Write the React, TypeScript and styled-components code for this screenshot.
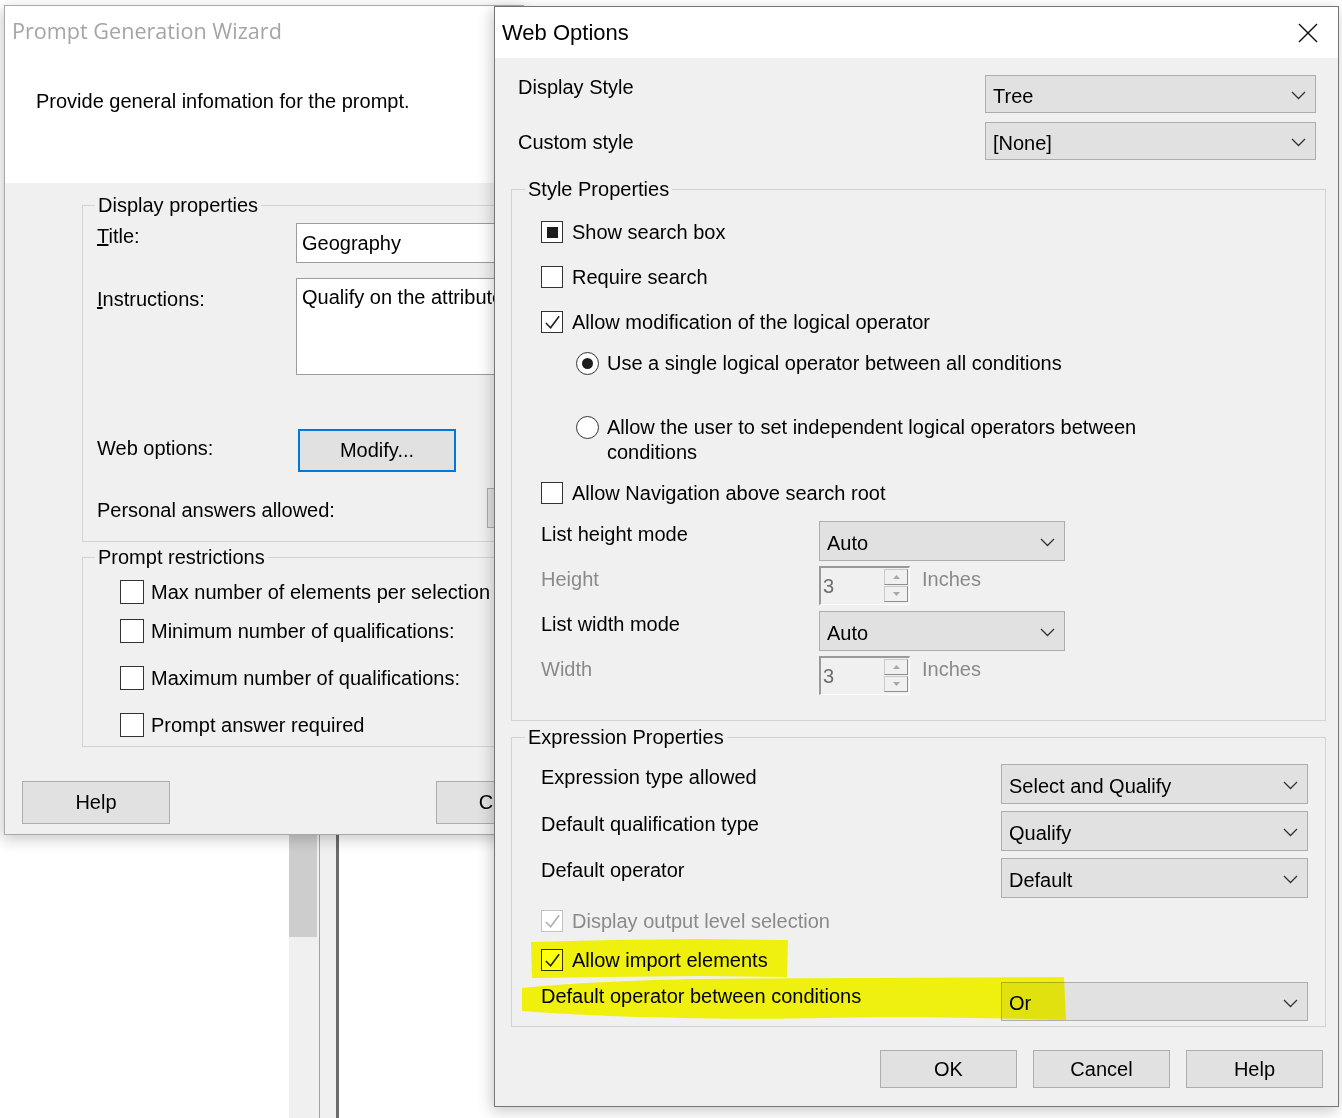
import React from "react";
import styled, { createGlobalStyle } from "styled-components";

const DISABLED = "#8a8a8a";

const GlobalStyle = createGlobalStyle`
  html, body {
    margin: 0;
    padding: 0;
    background: #fff;
  }
  body {
    font-family: "Liberation Sans", Arial, sans-serif;
    font-size: 20px;
    color: #000;
  }
  * {
    box-sizing: border-box;
  }
`;

const Desktop = styled.div`
  position: relative;
  width: 1342px;
  height: 1118px;
  overflow: hidden;
  background: #fff;
`;

/* window behind the dialogs, only its splitter strip is visible */
const BackPane = styled.div`
  position: absolute;
  left: 289px;
  top: 835px;
  width: 50px;
  height: 283px;
  display: flex;
`;

const Track = styled.div`
  width: 30px;
  background: #f0f0f0;
`;

const Thumb = styled.div`
  width: 28px;
  height: 102px;
  background: #cdcdcd;
`;

const Splitter = styled.div`
  width: 1px;
  background: #a3a3a3;
`;

const PaneGap = styled.div`
  width: 16px;
  background: #f0f0f0;
`;

const PaneEdge = styled.div`
  width: 3px;
  background: #6b6b6b;
`;

const Window = styled.div<{ $x: number; $y: number; $w: number; $h: number; $edge: string }>`
  position: absolute;
  left: ${(p) => p.$x}px;
  top: ${(p) => p.$y}px;
  width: ${(p) => p.$w}px;
  height: ${(p) => p.$h}px;
  display: flex;
  flex-direction: column;
  background: #f0f0f0;
  border: 1px solid ${(p) => p.$edge};
  box-shadow: -2px 4px 14px rgba(0, 0, 0, 0.22);
`;

/* ---------- wizard (left window) ---------- */

const WizardHeader = styled.div`
  height: 177px;
  background: #fff;
  padding: 11px 0 0 7px;
  display: flex;
  flex-direction: column;
`;

const WizardTitle = styled.div`
  font-family: "Open Sans", "Noto Sans", sans-serif;
  font-size: 21.6px;
  line-height: 28px;
  color: #a2a6aa;
`;

const WizardIntro = styled.div`
  margin-top: 44px;
  padding-left: 24px;
  line-height: 24px;
`;

const WizardBody = styled.div`
  flex: 1;
  display: flex;
  flex-direction: column;
  padding-top: 10px;
`;

const Group = styled.fieldset<{ $mt: number; $ml: number; $mr: number; $pl: number; $pb: number }>`
  margin: ${(p) => p.$mt}px ${(p) => p.$mr}px 0 ${(p) => p.$ml}px;
  padding: 0 0 ${(p) => p.$pb}px ${(p) => p.$pl}px;
  border: 1px solid #d3d3d3;
  min-width: 0;
`;

const Legend = styled.legend`
  padding: 0 3px;
  font-size: 20px;
  line-height: 24px;
`;

const Stack = styled.div<{ $indent: number }>`
  display: flex;
  flex-direction: column;
  padding-left: ${(p) => p.$indent}px;
`;

const FormRow = styled.div<{ $mt: number }>`
  display: flex;
  align-items: flex-start;
  margin-top: ${(p) => p.$mt}px;
`;

const FormLabel = styled.div<{ $w: number; $dy: number; $muted?: boolean }>`
  width: ${(p) => p.$w}px;
  flex: none;
  padding-top: ${(p) => p.$dy}px;
  line-height: 24px;
  white-space: nowrap;
  color: ${(p) => (p.$muted ? DISABLED : "#000")};
`;

const TextBox = styled.div<{ $h: number; $pt: number }>`
  width: 220px;
  height: ${(p) => p.$h}px;
  padding: ${(p) => p.$pt}px 0 0 5px;
  background: #fff;
  border: 1px solid #9c9c9c;
  line-height: 24px;
  white-space: nowrap;
  overflow: hidden;
`;

const PushButton = styled.div<{ $w: number; $h: number; $focused?: boolean; $ml?: number }>`
  width: ${(p) => p.$w}px;
  height: ${(p) => p.$h}px;
  margin-left: ${(p) => p.$ml ?? 0}px;
  flex: none;
  display: flex;
  align-items: center;
  justify-content: center;
  background: #e1e1e1;
  border: ${(p) => (p.$focused ? "2px solid #0078d7" : "1px solid #adadad")};
  white-space: nowrap;
`;

const WizardFooter = styled.div`
  display: flex;
  padding: 34px 0 0 17px;
`;

/* ---------- web options (right window) ---------- */

const TitleBar = styled.div`
  height: 51px;
  flex: none;
  background: #fff;
  display: flex;
  align-items: center;
  justify-content: space-between;
  padding: 0 20px 0 7px;
`;

const TitleText = styled.div`
  font-size: 22px;
  line-height: 28px;
`;

const OptionsBody = styled.div`
  flex: 1;
  display: flex;
  flex-direction: column;
  padding: 17px 12px 0 16px;
`;

const TopRow = styled.div<{ $mt: number }>`
  display: flex;
  align-items: flex-start;
  justify-content: space-between;
  margin-top: ${(p) => p.$mt}px;
  padding: 0 10px 0 7px;
`;

const ExprRow = styled.div<{ $mt: number }>`
  display: flex;
  align-items: flex-start;
  justify-content: space-between;
  margin-top: ${(p) => p.$mt}px;
  padding-right: 17px;
`;

const GridRow = styled.div<{ $mt: number }>`
  display: grid;
  grid-template-columns: 278px auto;
  align-items: start;
  margin-top: ${(p) => p.$mt}px;
`;

const SelectBox = styled.div<{ $w: number; $h: number }>`
  width: ${(p) => p.$w}px;
  height: ${(p) => p.$h}px;
  flex: none;
  display: flex;
  align-items: center;
  justify-content: space-between;
  padding: 3px 9px 0 7px;
  background: #e1e1e1;
  border: 1px solid #adadad;
  line-height: 24px;
`;

const CheckRow = styled.div<{ $mt: number; $gap: number; $muted?: boolean }>`
  display: flex;
  align-items: center;
  gap: ${(p) => p.$gap}px;
  margin-top: ${(p) => p.$mt}px;
  line-height: 24px;
  color: ${(p) => (p.$muted ? DISABLED : "#000")};
  white-space: nowrap;
`;

const Box = styled.span<{ $size: number; $muted?: boolean }>`
  width: ${(p) => p.$size}px;
  height: ${(p) => p.$size}px;
  flex: none;
  display: flex;
  align-items: center;
  justify-content: center;
  background: #fff;
  border: 1.5px solid ${(p) => (p.$muted ? "#c4c4c4" : "#333")};
`;

const MixedMark = styled.span`
  width: 11px;
  height: 11px;
  background: #1c1c1c;
`;

const RadioRow = styled.div<{ $mt: number }>`
  display: flex;
  align-items: flex-start;
  gap: 8px;
  margin: ${(p) => p.$mt}px 0 0 35px;
  line-height: 25px;
`;

const RadioDot = styled.span<{ $on?: boolean }>`
  width: 23px;
  height: 23px;
  flex: none;
  margin-top: 1px;
  border-radius: 50%;
  border: 1.5px solid #333;
  background: #fff;
  display: flex;
  align-items: center;
  justify-content: center;

  &::after {
    content: "";
    display: ${(p) => (p.$on ? "block" : "none")};
    width: 11px;
    height: 11px;
    border-radius: 50%;
    background: #1c1c1c;
  }
`;

const RadioText = styled.span`
  max-width: 560px;
`;

const SpinLine = styled.div`
  display: flex;
  align-items: flex-start;
  gap: 12px;
`;

const Spinner = styled.div`
  width: 91px;
  height: 39px;
  display: flex;
  background: #f0f0f0;
  border-top: 2px solid #9a9a9a;
  border-left: 2px solid #9a9a9a;
  border-bottom: 1px solid #fff;
  border-right: 1px solid #fff;
`;

const SpinValue = styled.span`
  flex: 1;
  padding: 6px 0 0 2px;
  line-height: 24px;
  color: #6d6d6d;
`;

const SpinButtons = styled.div`
  width: 24px;
  display: flex;
  flex-direction: column;
  gap: 1px;
  margin: 1px 1px 2px 0;
`;

const SpinButton = styled.div`
  flex: 1;
  display: flex;
  align-items: center;
  justify-content: center;
  border: 1px solid #cacaca;
  border-right-color: #8f8f8f;
  border-bottom-color: #8f8f8f;
  background: #f0f0f0;
`;

const Unit = styled.span`
  padding-top: 1px;
  line-height: 24px;
  color: ${DISABLED};
`;

const OptionsFooter = styled.div`
  display: flex;
  justify-content: flex-end;
  gap: 16px;
  padding: 23px 3px 0 0;
`;

const Marker = styled.svg`
  position: absolute;
  left: 0;
  top: 0;
  width: 1342px;
  height: 1118px;
  pointer-events: none;
  mix-blend-mode: multiply;
`;

type CheckState = "off" | "on" | "mixed";

const Check = ({ state, size, muted }: { state: CheckState; size: number; muted?: boolean }) => (
  <Box $size={size} $muted={muted}>
    {state === "on" && (
      <svg width={size - 3} height={size - 3} viewBox="0 0 20 20">
        <polyline
          points="3,10.5 8,15.5 17,3.5"
          fill="none"
          stroke={muted ? "#b0b0b0" : "#222"}
          strokeWidth="1.7"
        />
      </svg>
    )}
    {state === "mixed" && <MixedMark />}
  </Box>
);

const Chevron = () => (
  <svg width="15" height="9" viewBox="0 0 15 9">
    <polyline points="1,1 7.5,7.5 14,1" fill="none" stroke="#333" strokeWidth="1.3" />
  </svg>
);

const Select = ({ value, w, h }: { value: string; w: number; h: number }) => (
  <SelectBox $w={w} $h={h}>
    <span>{value}</span>
    <Chevron />
  </SelectBox>
);

const Arrow = ({ up }: { up?: boolean }) => (
  <svg width="7" height="4" viewBox="0 0 7 4">
    <polygon points={up ? "0,4 3.5,0 7,4" : "0,0 3.5,4 7,0"} fill="#a8a8a8" />
  </svg>
);

const SpinField = ({ value }: { value: string }) => (
  <SpinLine>
    <Spinner>
      <SpinValue>{value}</SpinValue>
      <SpinButtons>
        <SpinButton>
          <Arrow up />
        </SpinButton>
        <SpinButton>
          <Arrow />
        </SpinButton>
      </SpinButtons>
    </Spinner>
    <Unit>Inches</Unit>
  </SpinLine>
);

const CloseIcon = () => (
  <svg width="20" height="20" viewBox="0 0 20 20">
    <line x1="1" y1="1" x2="19" y2="19" stroke="#111" strokeWidth="1.5" />
    <line x1="19" y1="1" x2="1" y2="19" stroke="#111" strokeWidth="1.5" />
  </svg>
);

const restrictions = [
  { mt: 11, text: "Max number of elements per selection" },
  { mt: 15, text: "Minimum number of qualifications:" },
  { mt: 23, text: "Maximum number of qualifications:" },
  { mt: 23, text: "Prompt answer required" },
];

const expressionRows = [
  { mt: 15, dy: 1, label: "Expression type allowed", value: "Select and Qualify" },
  { mt: 7, dy: 1, label: "Default qualification type", value: "Qualify" },
  { mt: 7, dy: 0, label: "Default operator", value: "Default" },
];

export default function App() {
  return (
    <>
      <GlobalStyle />
      <Desktop>
        <BackPane>
          <Track>
            <Thumb />
          </Track>
          <Splitter />
          <PaneGap />
          <PaneEdge />
        </BackPane>

        <Window $x={4} $y={5} $w={520} $h={830} $edge="#a9a9a9">
          <WizardHeader>
            <WizardTitle>Prompt Generation Wizard</WizardTitle>
            <WizardIntro>Provide general infomation for the prompt.</WizardIntro>
          </WizardHeader>
          <WizardBody>
            <Group $mt={0} $ml={77} $mr={0} $pl={12} $pb={13}>
              <Legend>Display properties</Legend>
              <Stack $indent={2}>
                <FormRow $mt={6}>
                  <FormLabel $w={199} $dy={1}>
                    <u>T</u>itle:
                  </FormLabel>
                  <TextBox $h={40} $pt={7}>Geography</TextBox>
                </FormRow>
                <FormRow $mt={15}>
                  <FormLabel $w={199} $dy={9}>
                    <u>I</u>nstructions:
                  </FormLabel>
                  <TextBox $h={97} $pt={6}>Qualify on the attribute</TextBox>
                </FormRow>
                <FormRow $mt={54}>
                  <FormLabel $w={199} $dy={7}>Web options:</FormLabel>
                  <PushButton $w={158} $h={43} $ml={2} $focused>
                    Modify...
                  </PushButton>
                </FormRow>
                <FormRow $mt={16}>
                  <FormLabel $w={390} $dy={10}>Personal answers allowed:</FormLabel>
                  <PushButton $w={100} $h={40} />
                </FormRow>
              </Stack>
            </Group>
            <Group $mt={3} $ml={77} $mr={0} $pl={12} $pb={9}>
              <Legend>Prompt restrictions</Legend>
              <Stack $indent={25}>
                {restrictions.map((r) => (
                  <CheckRow key={r.text} $mt={r.mt} $gap={7}>
                    <Check state="off" size={24} />
                    {r.text}
                  </CheckRow>
                ))}
              </Stack>
            </Group>
            <WizardFooter>
              <PushButton $w={148} $h={43}>Help</PushButton>
              <PushButton $w={148} $h={43} $ml={266}>Cancel</PushButton>
            </WizardFooter>
          </WizardBody>
        </Window>

        <Window $x={494} $y={6} $w={845} $h={1101} $edge="#767676">
          <TitleBar>
            <TitleText>Web Options</TitleText>
            <CloseIcon />
          </TitleBar>
          <OptionsBody>
            <TopRow $mt={0}>
              <FormLabel $w={300} $dy={0}>Display Style</FormLabel>
              <Select value="Tree" w={331} h={38} />
            </TopRow>
            <TopRow $mt={9}>
              <FormLabel $w={300} $dy={8}>Custom style</FormLabel>
              <Select value="[None]" w={331} h={38} />
            </TopRow>

            <Group $mt={17} $ml={0} $mr={0} $pl={13} $pb={25}>
              <Legend>Style Properties</Legend>
              <Stack $indent={16}>
                <CheckRow $mt={19} $gap={9}>
                  <Check state="mixed" size={22} />
                  Show search box
                </CheckRow>
                <CheckRow $mt={21} $gap={9}>
                  <Check state="off" size={22} />
                  Require search
                </CheckRow>
                <CheckRow $mt={21} $gap={9}>
                  <Check state="on" size={22} />
                  Allow modification of the logical operator
                </CheckRow>
                <RadioRow $mt={17}>
                  <RadioDot $on />
                  <RadioText>Use a single logical operator between all conditions</RadioText>
                </RadioRow>
                <RadioRow $mt={39}>
                  <RadioDot />
                  <RadioText>
                    Allow the user to set independent logical operators between conditions
                  </RadioText>
                </RadioRow>
                <CheckRow $mt={16} $gap={9}>
                  <Check state="off" size={22} />
                  Allow Navigation above search root
                </CheckRow>
                <GridRow $mt={16}>
                  <FormLabel $w={278} $dy={1}>List height mode</FormLabel>
                  <Select value="Auto" w={246} h={40} />
                </GridRow>
                <GridRow $mt={5}>
                  <FormLabel $w={278} $dy={1} $muted>Height</FormLabel>
                  <SpinField value="3" />
                </GridRow>
                <GridRow $mt={6}>
                  <FormLabel $w={278} $dy={1}>List width mode</FormLabel>
                  <Select value="Auto" w={246} h={40} />
                </GridRow>
                <GridRow $mt={5}>
                  <FormLabel $w={278} $dy={1} $muted>Width</FormLabel>
                  <SpinField value="3" />
                </GridRow>
              </Stack>
            </Group>

            <Group $mt={4} $ml={0} $mr={0} $pl={13} $pb={5}>
              <Legend>Expression Properties</Legend>
              <Stack $indent={16}>
                {expressionRows.map((r) => (
                  <ExprRow key={r.label} $mt={r.mt}>
                    <FormLabel $w={400} $dy={r.dy}>{r.label}</FormLabel>
                    <Select value={r.value} w={307} h={40} />
                  </ExprRow>
                ))}
                <CheckRow $mt={11} $gap={9} $muted>
                  <Check state="on" size={22} muted />
                  Display output level selection
                </CheckRow>
                <CheckRow $mt={15} $gap={9}>
                  <Check state="on" size={22} />
                  Allow import elements
                </CheckRow>
                <ExprRow $mt={10}>
                  <FormLabel $w={400} $dy={2}>Default operator between conditions</FormLabel>
                  <Select value="Or" w={307} h={39} />
                </ExprRow>
              </Stack>
            </Group>

            <OptionsFooter>
              <PushButton $w={137} $h={38}>OK</PushButton>
              <PushButton $w={137} $h={38}>Cancel</PushButton>
              <PushButton $w={137} $h={38}>Help</PushButton>
            </OptionsFooter>
          </OptionsBody>
        </Window>

        <Marker viewBox="0 0 1342 1118">
          <path
            d="M531,942 L610,940 L700,939 L788,940 L787,977 L700,976 L610,977 L532,978 Z"
            fill="#ffff10"
          />
          <path
            d="M522,988 C560,984 610,981 690,979 L1064,977 L1066,1020 C1000,1018 900,1016 820,1018 C740,1020 700,1018 640,1017 C580,1015 550,1013 522,1011 Z"
            fill="#ffff10"
          />
        </Marker>
      </Desktop>
    </>
  );
}
